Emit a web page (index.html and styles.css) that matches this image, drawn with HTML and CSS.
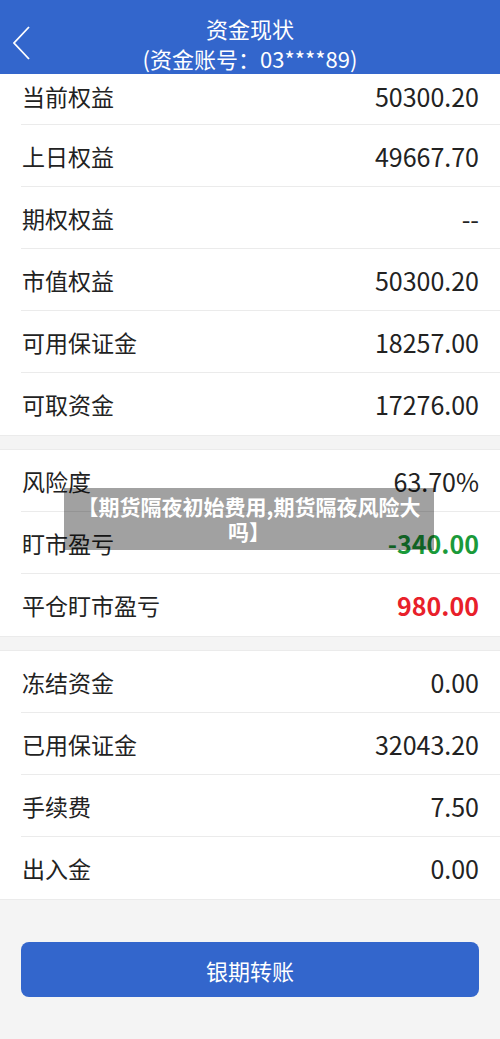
FILE: index.html
```html
<!DOCTYPE html>
<html lang="zh">
<head>
<meta charset="utf-8">
<title>资金现状</title>
<link rel="stylesheet" href="styles.css">
</head>
<body>
<div class="page">
  <header class="topbar">
    <button class="back" aria-label="返回">
      <svg width="20" height="36" viewBox="0 0 20 36"><path d="M16 1 L1 17 L16 33" fill="none" stroke="#fff" stroke-width="1.8"/></svg>
    </button>
    <div class="titles">
      <div class="title">资金现状</div>
      <div class="subtitle">(资金账号：03****89)</div>
    </div>
  </header>

  <section class="group">
    <div class="row first"><span class="label">当前权益</span><span class="value">50300.20</span></div>
    <div class="row"><span class="label">上日权益</span><span class="value">49667.70</span></div>
    <div class="row"><span class="label">期权权益</span><span class="value">--</span></div>
    <div class="row"><span class="label">市值权益</span><span class="value">50300.20</span></div>
    <div class="row"><span class="label">可用保证金</span><span class="value">18257.00</span></div>
    <div class="row"><span class="label">可取资金</span><span class="value">17276.00</span></div>
  </section>

  <section class="group">
    <div class="row"><span class="label">风险度</span><span class="value">63.70%</span></div>
    <div class="row"><span class="label">盯市盈亏</span><span class="value green">-340.00</span></div>
    <div class="row"><span class="label">平仓盯市盈亏</span><span class="value red">980.00</span></div>
  </section>

  <section class="group">
    <div class="row"><span class="label">冻结资金</span><span class="value">0.00</span></div>
    <div class="row"><span class="label">已用保证金</span><span class="value">32043.20</span></div>
    <div class="row"><span class="label">手续费</span><span class="value">7.50</span></div>
    <div class="row"><span class="label">出入金</span><span class="value">0.00</span></div>
  </section>

  <div class="actions">
    <button class="primary">银期转账</button>
  </div>

  <div class="toast">【期货隔夜初始费用,期货隔夜风险大吗】</div>
</div>
</body>
</html>
```

FILE: styles.css
```css
* { box-sizing: border-box; }
html, body {
  margin: 0;
  padding: 0;
  background: #f4f4f4;
  font-family: "Noto Sans CJK SC", "Noto Sans", sans-serif;
  color: #222;
}
.page {
  position: relative;
  width: 500px;
  min-height: 1039px;
  background: #f4f4f4;
}
.topbar {
  position: relative;
  height: 74px;
  background: #3366cc;
  display: flex;
  justify-content: center;
}
.back {
  position: absolute;
  left: 13px;
  top: 26px;
  padding: 0;
  border: 0;
  background: none;
  line-height: 0;
}
.titles {
  padding-top: 13px;
  text-align: center;
  color: #fff;
}
.title {
  font-size: 22px;
  line-height: 30px;
}
.subtitle {
  font-size: 22px;
  line-height: 30px;
}
.group {
  background: #fff;
  border-bottom: 1px solid #ebebeb;
  margin-bottom: 13px;
}
.group + .group {
  border-top: 1px solid #ebebeb;
}
.row {
  height: 62px;
  margin-left: 21px;
  padding-right: 21px;
  display: flex;
  align-items: center;
  justify-content: space-between;
  border-bottom: 1px solid #ebebeb;
}
.row:last-child { border-bottom: 0; }
.row.first {
  height: 51px;
  padding-bottom: 7px;
}
.label {
  font-size: 23px;
  padding-left: 1px;
}
.value {
  font-size: 25px;
}
.value.green { color: #1a9a3a; font-weight: 700; }
.value.red { color: #e8202a; font-weight: 700; }
.actions {
  padding: 29px 21px 0;
}
.primary {
  display: block;
  width: 100%;
  height: 55px;
  border: 0;
  border-radius: 8px;
  background: #3366cc;
  color: #fff;
  font-family: inherit;
  font-size: 22px;
}
.toast {
  position: absolute;
  left: 64px;
  top: 488px;
  width: 370px;
  height: 62px;
  padding: 6px 4px 0;
  background: rgba(0, 0, 0, 0.37);
  color: #fff;
  font-weight: 700;
  font-size: 21px;
  line-height: 25px;
  text-align: center;
}
```
